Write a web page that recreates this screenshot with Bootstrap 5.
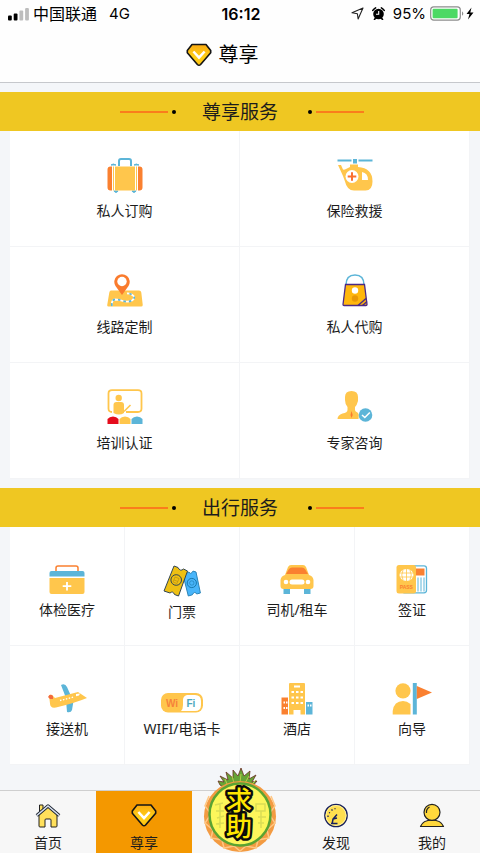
<!DOCTYPE html>
<html lang="zh-CN">
<head>
<meta charset="utf-8">
<meta name="viewport" content="width=device-width, initial-scale=1">
<title>尊享</title>
<link href="https://cdn.jsdelivr.net/npm/bootstrap@5.3.0/dist/css/bootstrap.min.css" rel="stylesheet">
<style>
  body { background: #f4f6f9; color: #1c1c1c; font-family: "Noto Sans", "Noto Sans CJK SC", sans-serif; font-size: 14px; line-height: 20px; }
  svg { display: block; flex: none; }
  .top-area { background: #fefefe; border-bottom: 1px solid #c6c8cc; }
  .status-bar { height: 27px; padding: 0 6px 0 8px; font-family: Inter, "Noto Sans CJK SC", sans-serif; font-size: 15px; color: #000; }
  .status-bar .side { flex: 1 1 0; }
  .carrier { font-size: 16px; margin: 0 12px 0 4px; }
  .clock { font-weight: 600; font-size: 16px; }
  .page-title { height: 55px; font-size: 20px; font-weight: 400; line-height: 28px; color: #000; gap: 7px; padding-right: 36px; }
  .band { background: #efc722; height: 39px; margin-top: 9px; }
  .band h2 { font-size: 19px; line-height: 28px; width: 132px; font-weight: 400; }
  .rule { width: 48px; height: 2px; background: #fa7d1c; }
  .dot { width: 4px; height: 4px; border-radius: 50%; background: #000; }
  .tiles { margin: 0 10px; background: #fff; }
  .tile { color: #1c1c1c; background: #fff; border-right: 1px solid #f3f4f6; border-bottom: 1px solid #f3f4f6; white-space: nowrap; }
  .tile-lg { height: 116px; padding-top: 26px; gap: 8px; }
  .tile-sm { height: 119px; padding-top: 37px; gap: 4px; }
  .tabs { background: #f7f7f7; border-top: 1px solid #cfcfcf; height: 63px; }
  .tab-link { color: #1c1c1c; padding-top: 12px; gap: 5px; }
  .tab-link.current { background: #f49800; }
  .help-link { top: -24px; left: 50%; margin-left: -38px; }
  .help-text { writing-mode: vertical-rl; font-family: "Noto Sans CJK SC", sans-serif; font-size: 26px; font-weight: 500; paint-order: stroke; }
</style>
<script src="https://cdn.jsdelivr.net/npm/bootstrap@5.3.0/dist/js/bootstrap.bundle.min.js"></script>
</head>
<body>
<svg width="0" height="0" class="position-absolute" aria-hidden="true">
  <defs>
    <linearGradient id="gold" x1="0" y1="0" x2="0" y2="1"><stop offset="0" stop-color="#fbaa11"/><stop offset=".6" stop-color="#ffd016"/><stop offset="1" stop-color="#ffc211"/></linearGradient>
    <symbol id="gem" viewBox="0 0 26 24">
      <path d="M6 1.500h14l4.700 6v2.200L14.600 21.500q-1.600 1.600-3.200 0L1.300 9.700V7.500z" fill="url(#gold)" stroke="#151515" stroke-width="1.600" stroke-linejoin="round"/>
      <path d="M7.400 8.500l5.600 6.200 5.600-6.200" fill="none" stroke="#fff" stroke-width="2.500"/>
    </symbol>
  </defs>
</svg>
<div class="d-flex flex-column min-vh-100">
  <header class="top-area">
    <div class="status-bar d-flex align-items-center">
      <div class="side d-flex align-items-center">
        <svg width="21" height="14" viewBox="0 0 21 14" fill="#000"><rect y="8.500" width="3.800" height="5" rx="1"/><rect x="5.700" y="6.500" width="3.800" height="7" rx="1"/><g fill="#bdbdbd"><rect x="11.400" y="3.500" width="3.800" height="10" rx="1"/><rect x="17.100" y="1" width="3.800" height="12.500" rx="1"/></g></svg>
        <span class="carrier">中国联通</span><span>4G</span>
      </div>
      <div class="clock">16:12</div>
      <div class="side d-flex align-items-center justify-content-end">
        <svg width="13" height="13" viewBox="0 0 13 13" fill="none" stroke="#222" stroke-width="1.100" stroke-linejoin="round"><path d="M12 1L1 5.800l5.400.9.700 5.300z"/></svg>
        <svg class="ms-2" width="13" height="13" viewBox="0 0 13 13"><circle cx="6.500" cy="7" r="5.300"/><path d="M.8 3.400A9 9 0 0 1 3.600.9M12.200 3.400A9 9 0 0 0 9.400.9M2.500 12.500l1.500-2M10.500 12.500L9 10.500" stroke="#000" stroke-width="1.600" stroke-linecap="round"/><path d="M6.700 4v3.300H4" fill="none" stroke="#fff" stroke-width="1.100"/></svg>
        <span class="ms-2">95%</span>
        <svg class="ms-1" width="44" height="15" viewBox="0 0 44 15"><rect x=".7" y=".9" width="29.600" height="13.200" rx="3" fill="#fff" stroke="#8d8d8d" stroke-width="1.200"/><rect x="2.600" y="2.800" width="25" height="9.400" rx="1" fill="#4cd964"/><path d="M32 5.200q2.600 2.300 0 4.600z" fill="#8d8d8d"/><path d="M41.500 1.500L36.500 8h3l-1.500 5.500L43.500 6.600h-3.200z"/></svg>
      </div>
    </div>
    <h1 class="page-title d-flex justify-content-center align-items-center mb-0">
      <svg width="26" height="24"><use href="#gem"/></svg>尊享
    </h1>
  </header>

  <main>
    <section>
      <div class="band d-flex align-items-center justify-content-center ps-1">
        <span class="rule"></span><span class="dot ms-1"></span><h2 class="text-center mb-0 pe-1">尊享服务</h2><span class="dot me-1"></span><span class="rule"></span>
      </div>
      <div class="tiles row row-cols-2 g-0">
        <a href="#" class="col tile tile-lg d-flex flex-column align-items-center text-decoration-none">
          <svg width="36" height="36" viewBox="0 0 36 36"><path d="M12 9V4q0-2 2-2h8q2 0 2 2v5" fill="none" stroke="#5cb5d8" stroke-width="2"/><path d="M4 8q2-2 5 0zM27 8q2-2 5 0zM7 34h4l-1 1.200H8zM25 34h4l-1 1.200h-2z" fill="#5cb5d8" stroke="#5cb5d8"/><path d="M5 9.500v24H3.500q-3 0-3-3v-18q0-3 3-3zM31 9.500v24h1.500q3 0 3-3v-18q0-3-3-3z" fill="#fa8030"/><path d="M6 9.500h1v24H6zM8 9.500h20v24H8zM29 9.500h1v24h-1z" fill="#ffc64c"/></svg>
          <span>私人订购</span></a>
        <a href="#" class="col tile tile-lg d-flex flex-column align-items-center text-decoration-none">
          <svg width="36" height="36" viewBox="0 0 36 36"><path d="M.5 3.500h14M21.500 3.500h14" stroke="#5cb5d8" stroke-width="2.200"/><path d="M16 2h4v4.500h-4z" fill="#5cb5d8"/><path d="M1 8h3l2 4.500q2 .5 4-1l3-1.500V7.500h8V10q14.500 1 14.500 14.500 0 9-7 9H17q-7 0-9-9L6 19z" fill="#ffc64c"/><circle cx="15" cy="19.500" r="6.500" fill="#fff"/><path d="M15 15.200v8.600M10.700 19.500h8.600" stroke="#fa7030" stroke-width="2"/><path d="M25 15q6 1 6 8h-6z" fill="#fff"/></svg>
          <span>保险救援</span></a>
        <a href="#" class="col tile tile-lg d-flex flex-column align-items-center text-decoration-none">
          <svg width="36" height="36" viewBox="0 0 36 36"><path d="M4 17.500h28q2 0 2.300 2l1.400 12q.2 2-1.500 2H1.500q-1.700 0-1.200-2l2-12q.4-2 1.700-2z" fill="#ffc64c"/><g fill="none" stroke-width="1.800"><path id="trail" d="M5 33q-1-6 3-6.500 4 0 8 1.500 5 1.500 9-.5 4-3 1-5-3-2.500-6-2" stroke="#fff"/><path d="M5 33q-1-6 3-6.500 4 0 8 1.500 5 1.500 9-.5 4-3 1-5-3-2.500-6-2" stroke="#5cb5d8" stroke-dasharray="2.500 3"/></g><path d="M15 22L8.500 13A7.700 7.700 0 1 1 21.500 13z" fill="#fa7b2d"/><circle cx="15" cy="8.500" r="4.700" fill="#fff"/></svg>
          <span>线路定制</span></a>
        <a href="#" class="col tile tile-lg d-flex flex-column align-items-center text-decoration-none">
          <svg width="36" height="36" viewBox="0 0 36 36"><path d="M9 12q0-10 9-10t9 10" fill="none" stroke="#5cb5d8" stroke-width="1.500"/><path d="M8.500 11.500h19l2.500 20q0 1-1 1H7q-1 0-1-1z" fill="#ffb70c" stroke="#4b2a86" stroke-width="1.300"/><circle cx="18" cy="17.500" r="3.200" fill="#fff"/><circle cx="18" cy="25.500" r="3.200" fill="#e89806"/><path d="M21 32.500l8-7M25.500 32.500l4.500-4" stroke="#4b2a86" stroke-width="1.500"/></svg>
          <span>私人代购</span></a>
        <a href="#" class="col tile tile-lg d-flex flex-column align-items-center text-decoration-none">
          <svg width="36" height="36" viewBox="0 0 36 36"><path d="M5 23q-3.500 0-3.500-3.500v-15Q1.500 1.200 5 1.200h26q3.500 0 3.500 3.300v15q0 3.500-3.500 3.500H19" fill="none" stroke="#ffc64c" stroke-width="1.800"/><circle cx="11.700" cy="9" r="3.200" fill="#ffc64c"/><path d="M6.500 24v-8q0-3 3-3h4.500q3 0 3 3v8q-5 3-10.500 0z" fill="#ffc64c"/><path d="M17 22.500l6.500-6.500" stroke="#ffc64c" stroke-width="1.600"/><path d="M.5 35v-5q2-2.500 5.500-2.500t5.500 2.500v5z" fill="#e50c1c"/><path d="M12.500 35v-5q2-2.500 5.500-2.500t5.500 2.500v5z" fill="#ffc64c"/><path d="M24.500 35v-5q2-2.500 5.500-2.500t5.500 2.500v5z" fill="#5cb5d8"/></svg>
          <span>培训认证</span></a>
        <a href="#" class="col tile tile-lg d-flex flex-column align-items-center text-decoration-none">
          <svg width="36" height="36" viewBox="0 0 36 36"><path d="M8 8q0-6 6.500-6T21 8v4q-1 4-3 6v3q0 1.500 2 2.200 2.500 1 1.500 6.800H.5q0-4 5-5.500 5-1 5-3.500v-3Q8 15 8 11z" fill="#ffc64c"/><path d="M14.500 22l1.200 4-1.200 3-1-3z" fill="#fa7b2d"/><circle cx="28.500" cy="26" r="6.800" fill="#5cb5d8"/><path d="M25 26l2.800 2.500 5-5" fill="none" stroke="#fff" stroke-width="1.500"/></svg>
          <span>专家咨询</span></a>
      </div>
    </section>

    <section>
      <div class="band d-flex align-items-center justify-content-center ps-1">
        <span class="rule"></span><span class="dot ms-1"></span><h2 class="text-center mb-0 pe-1">出行服务</h2><span class="dot me-1"></span><span class="rule"></span>
      </div>
      <div class="tiles row row-cols-4 g-0">
        <a href="#" class="col tile tile-sm d-flex flex-column align-items-center text-decoration-none">
          <svg width="36" height="32" viewBox="0 0 36 32"><path d="M7 8V4q0-2 2-2h18q2 0 2 2v4" fill="none" stroke="#fa8030" stroke-width="1.500"/><path d="M.5 12.500V9q0-2 2-2h31q2 0 2 2v3.500z" fill="#5cb5d8"/><path d="M.5 14h35v14q0 2-2 2h-31q-2 0-2-2z" fill="#ffc64c"/><path d="M18 18v8.500M13.700 22.200h8.600" stroke="#fff" stroke-width="1.800"/></svg>
          <span>体检医疗</span></a>
        <a href="#" class="col tile tile-sm d-flex flex-column align-items-center text-decoration-none">
          <svg width="38" height="34" viewBox="0 0 38 34" stroke="#314553" stroke-width="1"><path d="M22 10l4-2q1.500 3.300 4-.9l3 .9 4.400 21-3.700 1q-2-3.500-4.400.8l-4 1.200-5-20z" fill="#48b5fa" stroke="#2b84b8"/><path d="M11 2l4 1.500q2.200 4.500 5.500 1.500L24.500 7 15.500 32l-4-1.500q-1.500-4-4.500-1.500L1 27z" fill="#eec013"/><circle cx="13.200" cy="16" r="5.300" fill="none"/><path d="M12 13l4 1.500-2 5-4-1.500zM11 16l4 1.500" fill="none" stroke="#b48a10" stroke-width=".6"/><circle cx="28.800" cy="19" r="4.600" fill="none" stroke="#1979ae"/><circle cx="28.800" cy="19" r="2.200" fill="none" stroke="#1979ae" stroke-width=".6"/></svg>
          <span>门票</span></a>
        <a href="#" class="col tile tile-sm d-flex flex-column align-items-center text-decoration-none">
          <svg width="34" height="32" viewBox="0 0 34 32"><path d="M3.500 24h6.500v6H3.500zM24 24h6.500v6H24z" fill="#5cb5d8"/><path d="M5 11L8 3q1-2 3-2h12q2 0 3 2l3 8q4 1 4.500 5v6q0 3-3 3h-27q-3 0-3-3v-6Q1 12 5 11z" fill="#ffc64c"/><path d="M6 10l3-5q1-1.500 3-1.500h10q2 0 3 1.500l3 5z" fill="#fa8030"/><circle cx="6" cy="18" r="2.300" fill="#fff"/><circle cx="28" cy="18" r="2.300" fill="#fff"/><rect x="9.500" y="15.500" width="15" height="5" rx="2.500" fill="#fff"/></svg>
          <span>司机/租车</span></a>
        <a href="#" class="col tile tile-sm d-flex flex-column align-items-center text-decoration-none">
          <svg width="32" height="32" viewBox="0 0 32 32"><rect x="6" y="1.800" width="24.500" height="27" rx="2.500" fill="#fff" stroke="#5cb5d8" stroke-width="1.300"/><path d="M20 4.500h8.500v7H20z" fill="#fa8030"/><path d="M22 13.500v14M25 13.500v14M28 13.500v14" stroke="#5cb5d8"/><rect x=".5" y="1" width="19.500" height="28.500" rx="2.500" fill="#ffc64c"/><ellipse cx="10.500" cy="11" rx="7" ry="6" fill="#fff"/><path d="M4 9h13M4 13h13M10.500 5v12M7 6q-2.500 5 0 10M14 6q2.500 5 0 10" fill="none" stroke="#ffc64c" stroke-width=".8"/><text x="10.300" y="24.800" text-anchor="middle" font-family="Liberation Sans, sans-serif" font-size="5" font-weight="700" fill="#fa8030">PASS</text></svg>
          <span>签证</span></a>
        <a href="#" class="col tile tile-sm d-flex flex-column align-items-center text-decoration-none">
          <svg width="40" height="32" viewBox="0 0 40 32"><path d="M14 2q4-2 6 2l4 9-5 2zM19 17l8-2-2 12q-1 3-5 2z" fill="#5cb5d8"/><path d="M2 12q3-1 4 1l2 2 23-6 9 6q-12 5-31 9.500-6 1-6-4z" fill="#ffc64c"/><path d="M1 14q2-4 5-1l0 3-3 0z" fill="#f36b3e"/><path d="M13 17.500l14-3.500" stroke="#fff" stroke-width="1.300" stroke-dasharray="1.500 1.500"/><path d="M29 11l4-.5-1 2-3 .8z" fill="#fff"/></svg>
          <span>接送机</span></a>
        <a href="#" class="col tile tile-sm d-flex flex-column align-items-center text-decoration-none">
          <svg width="42" height="32" viewBox="0 0 42 32"><rect y="10" width="42" height="19.500" rx="7" fill="#ffc64c"/><path d="M26 12h8q6 0 6 6v4q0 6-6 6H20q2-2 2-6v-5q0-4 4-5z" fill="#fff"/><g font-family="Liberation Sans, sans-serif" font-size="10" font-weight="700"><text x="5" y="23.500" fill="#f6823a">Wi</text><text x="25.500" y="23.500" fill="#4ba7bd">Fi</text></g></svg>
          <span>WIFI/电话卡</span></a>
        <a href="#" class="col tile tile-sm d-flex flex-column align-items-center text-decoration-none">
          <svg width="32" height="32" viewBox="0 0 32 32"><path d="M.5 14.500h6.500v17H.5z" fill="#fa8030"/><path d="M25 19h6.500v12.500H25z" fill="#5cb5d8"/><path d="M8 1q0-1 1-1h14q1 0 1 1v30.500h-4.500V27h-7v4.500H8z" fill="#ffc64c"/><path d="M13 3.500h6M10.500 9h2.500M15 9h2.500M19.500 9H22M10.500 14.500h2.500M15 14.500h2.500M19.500 14.500H22M10.500 20h2.500M15 20h2.500M19.500 20H22M2.500 19.500H4M5 19.500h1.500M2.500 25H4M5 25h1.500M26.500 22.500H28M29 22.500h1.500" stroke="#fff" stroke-width="2"/></svg>
          <span>酒店</span></a>
        <a href="#" class="col tile tile-sm d-flex flex-column align-items-center text-decoration-none">
          <svg width="40" height="32" viewBox="0 0 40 32"><circle cx="11" cy="7.800" r="7.600" fill="#ffc64c"/><path d="M.7 31.500V28Q2 18 11 18q4 0 7.500 3v10.500z" fill="#ffc64c"/><path d="M20.800 0h4v31.500h-4z" fill="#5cb5d8"/><path d="M24.800 3L40 9.500 24.800 16z" fill="#fa8030"/></svg>
          <span>向导</span></a>
      </div>
    </section>
  </main>

  <nav class="tabs mt-auto d-flex position-relative">
    <a href="#" class="tab-link flex-fill w-100 d-flex flex-column align-items-center text-decoration-none">
      <svg width="26" height="25" viewBox="0 0 26 25"><path d="M4 10L13 3l9 7v13q0 1-1 1h-5v-7q0-1-1-1h-4q-1 0-1 1v7H5q-1 0-1-1z" fill="#ffe05b" stroke="#222" stroke-width="1"/><path d="M4.500 8.500V2H8v4" fill="#ffe05b" stroke="#222"/><path d="M1.800 12.500L13 3l11.200 9.500" fill="none" stroke="#1c2430" stroke-width="3.400" stroke-linejoin="round"/><path d="M1.800 12.500L13 3l11.200 9.500" fill="none" stroke="#d8e0ef" stroke-width="1.600"/></svg>
      <span>首页</span></a>
    <a href="#" class="tab-link current flex-fill w-100 d-flex flex-column align-items-center text-decoration-none" aria-current="page">
      <svg width="26" height="25"><use href="#gem"/></svg>
      <span>尊享</span></a>
    <span class="flex-fill w-100"></span>
    <a href="#" class="tab-link flex-fill w-100 d-flex flex-column align-items-center text-decoration-none">
      <svg width="26" height="25" viewBox="0 0 26 25"><circle cx="13" cy="12.500" r="11.200" fill="#ffdf4f" stroke="#172060" stroke-width="1.300"/><circle cx="13" cy="12.500" r="10" fill="none" stroke="#fff1a0"/><path d="M14 11.500L10 16l-.8 4.500M10 16l4-1M8 20.500h6.500" fill="none" stroke="#172060" stroke-width="1.500"/><path d="M5 14v-1.500M6 9.500l1 .5M8.500 6.500l1 1M12 5.200v1" stroke="#172060" stroke-width="1.300"/></svg>
      <span>发现</span></a>
    <a href="#" class="tab-link flex-fill w-100 d-flex flex-column align-items-center text-decoration-none">
      <svg width="26" height="25" viewBox="0 0 26 25" fill="#ffd83c" stroke="#222" stroke-width="1.200" stroke-linejoin="round"><path d="M1.500 23.500Q4 17 13 17t11.500 6.500z"/><circle cx="13" cy="9.300" r="8"/><path d="M7.500 10q-.5-4 3-6" fill="none"/></svg>
      <span>我的</span></a>
    <a href="#" class="help-link position-absolute" aria-label="求助">
      <svg width="76" height="86" viewBox="0 0 76 86">
        <g fill="#66a436" stroke="#6b2e22" stroke-width=".8"><path d="M18 18l-2-4 6 1-4-6 8 4-2-8 7 6 0-8 5 6 3-8 3 8 6-5-1 8 7-4-4 7 5-1-5 6-14 4H27z"/></g>
        <path d="M25 17l-2-5M32 16l-2-7M38 16l1-9M43 16l4-7M50 17l4-4" stroke="#b5cf49" fill="none"/>
        <ellipse cx="38" cy="49.500" rx="36" ry="35.500" fill="#f39b42"/>
        <path d="M7 29l-4 10 6 8-6 9 8 7-2 8 11 2 2 8 10-2 6 5 6-5 10 2 2-8 11-2-2-8 8-7-6-9 6-8-4-10" fill="none" stroke="#ffc783" stroke-width="1.500"/>
        <ellipse cx="38" cy="47.500" rx="30.500" ry="31" fill="#fcf65b" stroke="#5aa332" stroke-width="2.500"/>
        <path d="M13 38l8-2M14 44h8M15 51l7-2M14 57l8-1M18 36v25M54 37h9v7h-9zM56 50h8M56 56h6M59 44v17" fill="none" stroke="#dadd55" stroke-width="1.500"/>
        <text class="help-text" x="37" y="20" fill="#ffe600" stroke="#0b0b0b" stroke-width="5" stroke-linejoin="round">求助</text>
      </svg>
    </a>
  </nav>
</div>
</body>
</html>
